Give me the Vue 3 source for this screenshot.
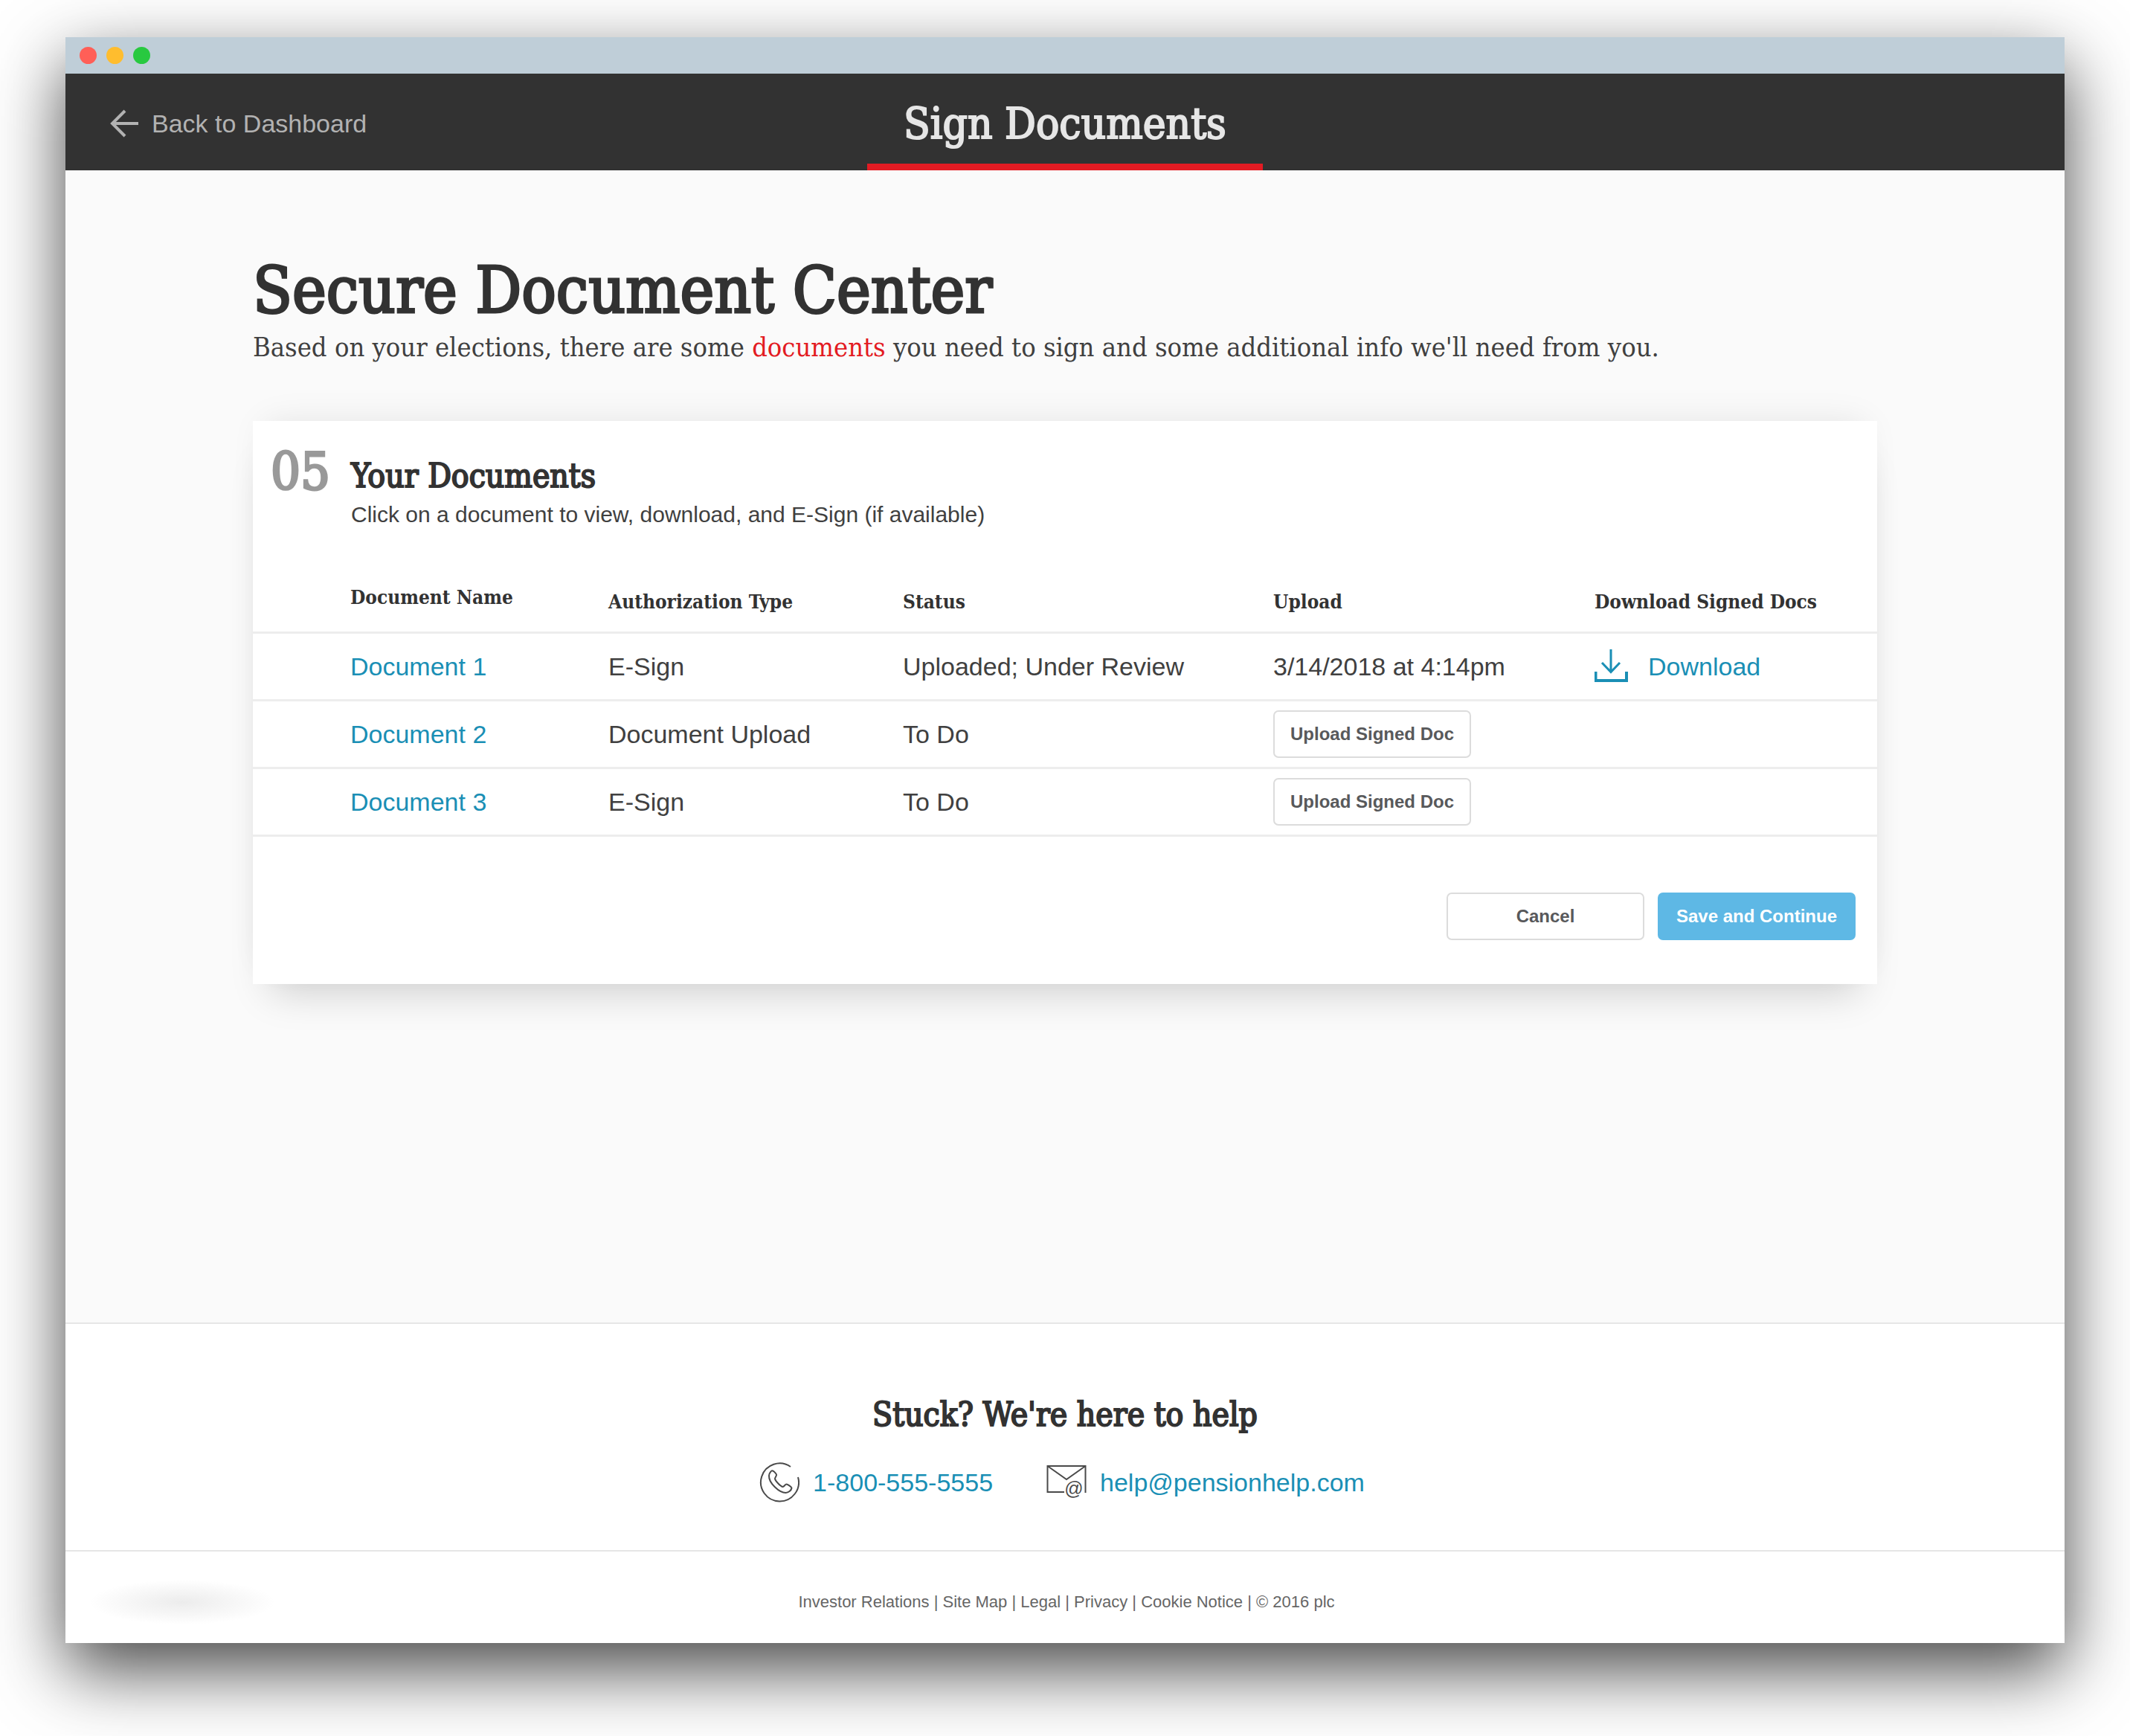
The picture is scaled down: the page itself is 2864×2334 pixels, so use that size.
<script setup>
const documents = [
  { name: 'Document 1', type: 'E-Sign', status: 'Uploaded; Under Review', uploaded: '3/14/2018 at 4:14pm' },
  { name: 'Document 2', type: 'Document Upload', status: 'To Do', uploaded: '' },
  { name: 'Document 3', type: 'E-Sign', status: 'To Do', uploaded: '' },
]
const legalLinks = ['Investor Relations', 'Site Map', 'Legal', 'Privacy', 'Cookie Notice']
</script>

<template>
  <div class="window">
    <div class="titlebar">
      <span class="dot dot-close"></span>
      <span class="dot dot-minimize"></span>
      <span class="dot dot-zoom"></span>
    </div>

    <header class="topbar">
      <a class="back" href="#">
        <svg width="38" height="38" viewBox="0 0 38 38" fill="none" stroke="currentColor" stroke-width="4" aria-hidden="true">
          <path d="M38 19H3M20 2L3 19L20 36" />
        </svg>
        Back to Dashboard
      </a>
      <div class="page-name">Sign Documents</div>
    </header>

    <main class="content">
      <h1>Secure Document Center</h1>
      <p class="intro">
        Based on your elections, there are some <span class="accent">documents</span> you need to sign and some additional info we'll need from you.
      </p>

      <section class="card">
        <div class="card-head">
          <div class="step">05</div>
          <div>
            <h2>Your Documents</h2>
            <p class="hint">Click on a document to view, download, and E-Sign (if available)</p>
          </div>
        </div>

        <table>
          <colgroup>
            <col class="col-name" />
            <col class="col-type" />
            <col class="col-status" />
            <col class="col-upload" />
            <col />
          </colgroup>
          <thead>
            <tr>
              <th class="name" scope="col">Document Name</th>
              <th scope="col">Authorization Type</th>
              <th scope="col">Status</th>
              <th scope="col">Upload</th>
              <th scope="col">Download Signed Docs</th>
            </tr>
          </thead>
          <tbody>
            <tr v-for="doc in documents" :key="doc.name">
              <td class="name"><a href="#">{{ doc.name }}</a></td>
              <td>{{ doc.type }}</td>
              <td>{{ doc.status }}</td>
              <td>
                <template v-if="doc.uploaded">{{ doc.uploaded }}</template>
                <button v-else type="button" class="btn">Upload Signed Doc</button>
              </td>
              <td>
                <a v-if="doc.uploaded" class="download" href="#">
                  <svg width="46" height="46" viewBox="0 0 46 46" fill="none" stroke="currentColor" aria-hidden="true">
                    <path d="M22 0V30M10 18L22 30.500L34 18" stroke-width="3" />
                    <path d="M1.500 30V42H43V30" stroke-width="4" />
                  </svg>
                  Download
                </a>
              </td>
            </tr>
          </tbody>
        </table>

        <div class="actions">
          <button type="button" class="btn">Cancel</button>
          <button type="button" class="btn btn-primary">Save and Continue</button>
        </div>
      </section>
    </main>

    <section class="help">
      <h2>Stuck? We're here to help</h2>
      <div class="contacts">
        <a class="contact" href="tel:1-800-555-5555">
          <svg width="54" height="54" viewBox="0 0 54 54" fill="none" stroke="#4a4a4a" stroke-width="2" aria-hidden="true">
            <path d="M42 6A25.500 25.500 0 1 0 52 20" />
            <path d="M18 11.500C16.500 10.500 13 14.500 13 18C12.500 28 27 41 35.500 41C39 41 43 38 43.500 34.500C43 33 38 29.500 36.500 29.500C34.500 29.500 33.500 33 31.500 33C28 32 21.500 25 21 22C21 20 23.500 18.500 23 16.500C22.500 15 19.500 12 18 11.500Z" />
          </svg>
          1-800-555-5555
        </a>
        <a class="contact" href="mailto:help@pensionhelp.com">
          <svg width="54" height="54" viewBox="0 0 54 54" fill="none" stroke="#4a4a4a" stroke-width="2" aria-hidden="true">
            <path d="M24 40H1.500V5H52.500V41M1.500 5L27 23L52.500 5" />
            <text x="37" y="44" text-anchor="middle" font-size="25" fill="#4a4a4a" stroke="none">@</text>
          </svg>
          help@pensionhelp.com
        </a>
      </div>
    </section>

    <footer class="legal">
      <div class="brand" aria-hidden="true"></div>
      <nav>
        <template v-for="link in legalLinks" :key="link"><a href="#">{{ link }}</a> | </template>© 2016 plc
      </nav>
    </footer>
  </div>
</template>

<style>
body {
  margin: 0;
  background: #fff;
}
</style>

<style scoped>
* {
  box-sizing: border-box;
}

.window {
  display: flex;
  flex-direction: column;
  min-height: calc(100vh - 175px);
  margin: 50px 88px 125px;
  background: #fff;
  box-shadow: 0 36px 90px rgba(0, 0, 0, 0.72);
  color: #404040;
  font-family: "Liberation Sans", Arial, sans-serif;
  font-size: 34px;
}

h1,
h2,
p {
  margin: 0;
}

a {
  color: #1a8fb5;
  text-decoration: none;
}

svg {
  flex: none;
}

h1,
h2,
th,
.intro,
.step,
.page-name {
  font-family: "DejaVu Serif Condensed", "DejaVu Serif", serif;
}

.titlebar {
  display: flex;
  align-items: center;
  gap: 13px;
  height: 49px;
  padding: 0 19px;
  background: #bfced8;
}

.dot {
  width: 23px;
  height: 23px;
  border-radius: 50%;
}

.dot-close {
  background: #ff5f57;
}

.dot-minimize {
  background: #ffbd2e;
}

.dot-zoom {
  background: #28c940;
}

.topbar {
  display: grid;
  grid-template-columns: 1fr 532px 1fr;
  height: 130px;
  background: #323232;
}

.back {
  display: flex;
  align-items: center;
  gap: 18px;
  padding: 4px 0 0 60px;
  color: #b2b2b2;
}

.page-name {
  padding-top: 14px;
  border-bottom: 9px solid #e31b23;
  color: #e6e6e6;
  font-size: 58px;
  line-height: 106px;
  text-align: center;
  -webkit-text-stroke: 2px;
}

.content {
  flex: 1;
  padding: 111px 252px 120px;
  background: #fafafa;
}

h1 {
  color: #323232;
  font-size: 86px;
  font-weight: 400;
  line-height: 100px;
  -webkit-text-stroke: 3px;
}

.intro {
  font-size: 36px;
  line-height: 54px;
}

.accent {
  color: #e31b23;
}

.card {
  margin-top: 72px;
  background: #fff;
  box-shadow:
    0 34px 50px -24px rgba(0, 0, 0, 0.18),
    0 -14px 44px -18px rgba(0, 0, 0, 0.1);
}

.card-head {
  display: flex;
  padding-top: 46px;
}

.step {
  width: 132px;
  padding-left: 24px;
  color: #999;
  font-size: 70px;
  line-height: 44px;
  -webkit-text-stroke: 3px;
}

h2 {
  color: #323232;
  font-size: 44px;
  font-weight: 400;
  line-height: 56px;
  -webkit-text-stroke: 2px;
}

.hint {
  margin-top: 4px;
  font-size: 30px;
  line-height: 40px;
}

table {
  width: 100%;
  margin-top: 52px;
  border-spacing: 0;
  table-layout: fixed;
}

.col-name {
  width: 478px;
}

.col-type {
  width: 396px;
}

.col-status {
  width: 498px;
}

.col-upload {
  width: 432px;
}

th,
td {
  border-bottom: 3px solid #ededed;
  text-align: left;
  white-space: nowrap;
}

th {
  height: 88px;
  padding: 0 0 24px;
  color: #323232;
  font-size: 26px;
  line-height: 32px;
  vertical-align: bottom;
}

th.name {
  padding-bottom: 30px;
}

td {
  height: 91px;
  padding: 0;
}

.name {
  padding-left: 131px;
}

.btn {
  display: block;
  width: 266px;
  height: 64px;
  padding: 0;
  border: 2px solid #dcdcdc;
  border-radius: 7px;
  background: #fff;
  color: #58595b;
  font: bold 24px "Liberation Sans", Arial, sans-serif;
}

.btn-primary {
  border-color: #5eb8e5;
  background: #5eb8e5;
  color: #fff;
}

.download {
  display: flex;
  align-items: center;
  gap: 26px;
}

.actions {
  display: flex;
  justify-content: flex-end;
  gap: 18px;
  padding: 75px 29px 59px;
}

.help {
  padding: 94px 0 64px;
  border-top: 2px solid #e6e6e6;
  text-align: center;
}

.contacts {
  display: flex;
  justify-content: center;
  gap: 72px;
  margin-top: 36px;
  padding-right: 8px;
}

.contact {
  display: flex;
  align-items: center;
  gap: 18px;
}

.legal {
  display: grid;
  grid-template-columns: 1fr auto 1fr;
  align-items: center;
  height: 125px;
  padding: 12px 28px 0 32px;
  border-top: 2px solid #e6e6e6;
  color: #666;
  font-size: 22px;
}

.legal a {
  color: inherit;
}

.brand {
  width: 250px;
  height: 60px;
  background: radial-gradient(closest-side, #ececec, #fff);
}
</style>
